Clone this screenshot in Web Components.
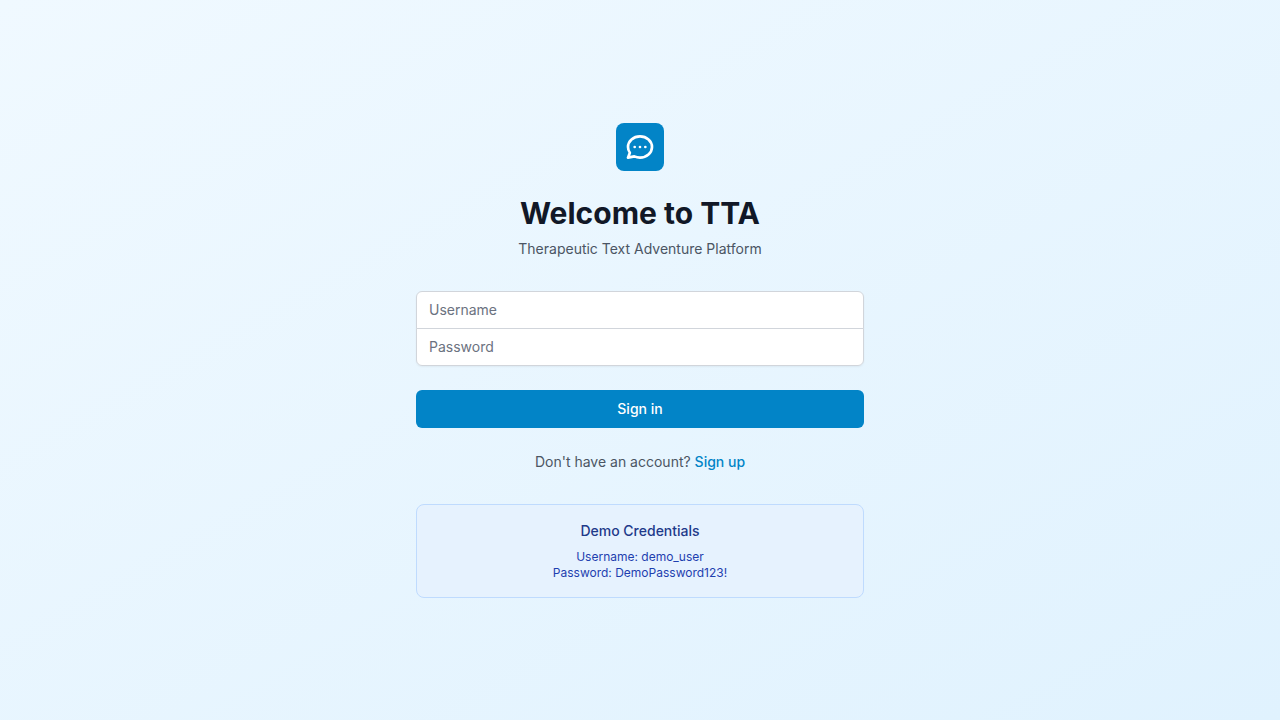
<!DOCTYPE html>
<html lang="en">
<head>
<meta charset="utf-8">
<meta name="viewport" content="width=device-width, initial-scale=1">
<title>Sign in - TTA</title>
<style>
  body { margin: 0; font-family: Inter, "Liberation Sans", sans-serif; font-size: 14px; line-height: 20px; color: #4b5563; }
</style>
</head>
<body>
<auth-page>
  <brand-header heading="Welcome to TTA">Therapeutic Text Adventure Platform</brand-header>
  <login-form></login-form>
  <demo-credentials heading="Demo Credentials">
    <p>Username: demo_user</p>
    <p>Password: DemoPassword123!</p>
  </demo-credentials>
</auth-page>

<template id="auth-page">
  <style>
    :host { display: flex; align-items: center; justify-content: center; min-height: 100vh; box-sizing: border-box; padding: 48px 16px; background: linear-gradient(to bottom right, #f0f9ff, #e0f2fe); }
    main { display: flex; flex-direction: column; gap: 32px; width: 100%; max-width: 448px; }
  </style>
  <main><slot></slot></main>
</template>

<template id="brand-header">
  <style>
    :host { display: flex; flex-direction: column; align-items: center; text-align: center; }
    .logo { display: flex; align-items: center; justify-content: center; width: 48px; height: 48px; border-radius: 8px; background: #0284c7; color: #fff; }
    h1 { margin: 24px 0 8px; font-size: 30px; line-height: 36px; font-weight: 700; color: #111827; }
    p { margin: 0; }
  </style>
  <div class="logo">
    <svg width="32" height="32" viewBox="0 0 24 24" fill="none" stroke="currentColor" stroke-width="2" stroke-linecap="round" stroke-linejoin="round" aria-hidden="true">
      <path d="M8 12h.01M12 12h.01M16 12h.01M21 12c0 4.418-4.03 8-9 8a9.863 9.863 0 01-4.255-.949L3 20l1.395-3.72C3.512 15.042 3 13.574 3 12c0-4.418 4.03-8 9-8s9 3.582 9 8z"/>
    </svg>
  </div>
  <h1></h1>
  <p><slot></slot></p>
</template>

<template id="login-form">
  <style>
    :host { display: block; }
    form { display: flex; flex-direction: column; gap: 24px; }
    .fields { display: flex; flex-direction: column; border-radius: 6px; box-shadow: 0 1px 2px rgba(0, 0, 0, .05); }
    input { box-sizing: border-box; width: 100%; margin: 0; padding: 8px 12px; height: 38px; border: 1px solid #d1d5db; background: #fff; font: inherit; color: #111827; outline: none; }
    input::placeholder { color: #6b7280; opacity: 1; }
    input:focus { border-color: #0284c7; }
    #username { border-radius: 6px 6px 0 0; }
    #password { border-radius: 0 0 6px 6px; margin-top: -1px; }
    button { padding: 8px 16px; border: 1px solid transparent; border-radius: 6px; background: #0284c7; color: #fff; font: inherit; font-weight: 500; cursor: pointer; }
    button:hover { background: #0369a1; }
    p { margin: 0; text-align: center; }
    a { color: #0284c7; font-weight: 500; text-decoration: none; }
  </style>
  <form>
    <div class="fields">
      <input id="username" name="username" type="text" placeholder="Username" aria-label="Username" autocomplete="username" required>
      <input id="password" name="password" type="password" placeholder="Password" aria-label="Password" autocomplete="current-password" required>
    </div>
    <button type="submit">Sign in</button>
    <p>Don't have an account? <a href="#signup">Sign up</a></p>
  </form>
</template>

<template id="demo-credentials">
  <style>
    :host { display: block; padding: 16px; border: 1px solid #bfdbfe; border-radius: 8px; background: #e6f2fe; text-align: center; font-size: 12px; line-height: 16px; color: #1e40af; }
    h2 { margin: 0 0 8px; font-size: 14px; line-height: 20px; font-weight: 500; color: #1e3a8a; }
    ::slotted(p) { margin: 0; }
  </style>
  <h2></h2>
  <slot></slot>
</template>

<script>
  class TemplateElement extends HTMLElement {
    connectedCallback() {
      if (this.shadowRoot) return;
      const root = this.attachShadow({ mode: "open" });
      root.append(document.getElementById(this.localName).content.cloneNode(true));
      const heading = root.querySelector("h1, h2");
      if (heading) heading.textContent = this.getAttribute("heading");
    }
  }
  customElements.define("auth-page", class AuthPage extends TemplateElement {});
  customElements.define("brand-header", class BrandHeader extends TemplateElement {});
  customElements.define("demo-credentials", class DemoCredentials extends TemplateElement {});
  customElements.define("login-form", class LoginForm extends TemplateElement {
    connectedCallback() {
      super.connectedCallback();
      this.shadowRoot.querySelector("form").onsubmit = (event) => event.preventDefault();
    }
  });
</script>
</body>
</html>
